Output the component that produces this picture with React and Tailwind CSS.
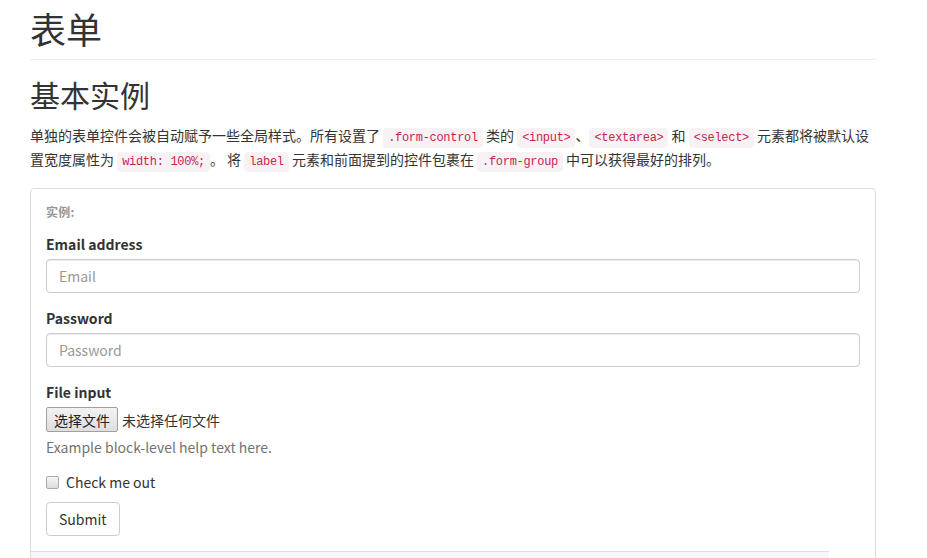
import React from 'react';

const font = { fontFamily: '"Noto Sans CJK SC", "Noto Sans", sans-serif' };

const Code = ({ children }) => (
  <code className="rounded px-[5px] py-[3px] leading-none bg-[#f9f2f4] text-[#c7254e] text-[12px] tracking-[-0.3px] font-['Liberation_Mono',monospace]">
    {children}
  </code>
);

export default function App() {
  return (
    <div className="bg-white text-[#333] text-sm h-[558px] overflow-hidden" style={font}>
      <div className="ml-[30px] w-[846px]">
        {/* page header */}
        <div className="border-b border-[#eee] pt-[5px] pb-[8px]">
          <h1 className="text-[36px] leading-[46px] font-normal">表单</h1>
        </div>

        <h2 className="text-[30px] leading-[36px] font-normal mt-[16px]">基本实例</h2>
        <p className="leading-6 mt-[11px]">
          单独的表单控件会被自动赋予一些全局样式。所有设置了 <Code>.form-control</Code> 类的 <Code>&lt;input&gt;</Code>、
          <Code>&lt;textarea&gt;</Code> 和 <Code>&lt;select&gt;</Code> 元素都将被默认设置宽度属性为 <Code>width: 100%;</Code>。 将{' '}
          <Code>label</Code> 元素和前面提到的控件包裹在 <Code>.form-group</Code> 中可以获得最好的排列。
        </p>

        {/* example box */}
        <div className="mt-[17px] border border-[#ddd] rounded-t px-[15px] pt-[13px] h-[400px]">
          <div className="text-xs font-bold text-[#959595] leading-[20px] tracking-wide">实例:</div>

          <form className="mt-[12px]">
            <div className="mb-[15px]">
              <label className="block font-bold leading-5 mb-[5px] text-[#333]">Email address</label>
              <input
                type="email"
                placeholder="Email"
                className="block w-full h-[34px] px-3 border border-[#ccc] rounded placeholder:text-[#999] text-sm shadow-[inset_0_1px_1px_rgba(0,0,0,0.075)] outline-none"
              />
            </div>
            <div className="mb-[15px]">
              <label className="block font-bold leading-5 mb-[5px] text-[#333]">Password</label>
              <input
                type="password"
                placeholder="Password"
                className="block w-full h-[34px] px-3 border border-[#ccc] rounded placeholder:text-[#999] text-sm shadow-[inset_0_1px_1px_rgba(0,0,0,0.075)] outline-none"
              />
            </div>
            <div className="mb-[15px]">
              <label className="block font-bold leading-5 mb-[5px] text-[#333]">File input</label>
              <div className="flex items-center h-[25px]">
                <span className="h-[25px] px-[7px] flex items-center border border-[#a0a0a0] rounded-[2px] bg-gradient-to-b from-[#f3f3f3] to-[#dedede] text-[#222] text-sm">
                  选择文件
                </span>
                <span className="ml-1 text-sm text-[#333]">未选择任何文件</span>
              </div>
              <p className="mt-[5px] leading-5 text-[#737373]">Example block-level help text here.</p>
            </div>
            <div className="mt-[10px] mb-[10px] flex items-center h-5">
              <span className="w-[13px] h-[13px] border border-[#aaa] rounded-[2px] bg-gradient-to-b from-[#f6f6f6] to-[#dcdcdc]" />
              <span className="ml-[7px] leading-5">Check me out</span>
            </div>
            <button
              type="button"
              className="h-[34px] px-3 border border-[#ccc] rounded bg-white text-[#333] text-sm"
            >
              Submit
            </button>
          </form>

          <div className="mt-[15px] -mx-[15px] w-[798px] border-t border-[#ddd] bg-[#f7f7f9] h-[40px]" />
        </div>
      </div>
    </div>
  );
}
